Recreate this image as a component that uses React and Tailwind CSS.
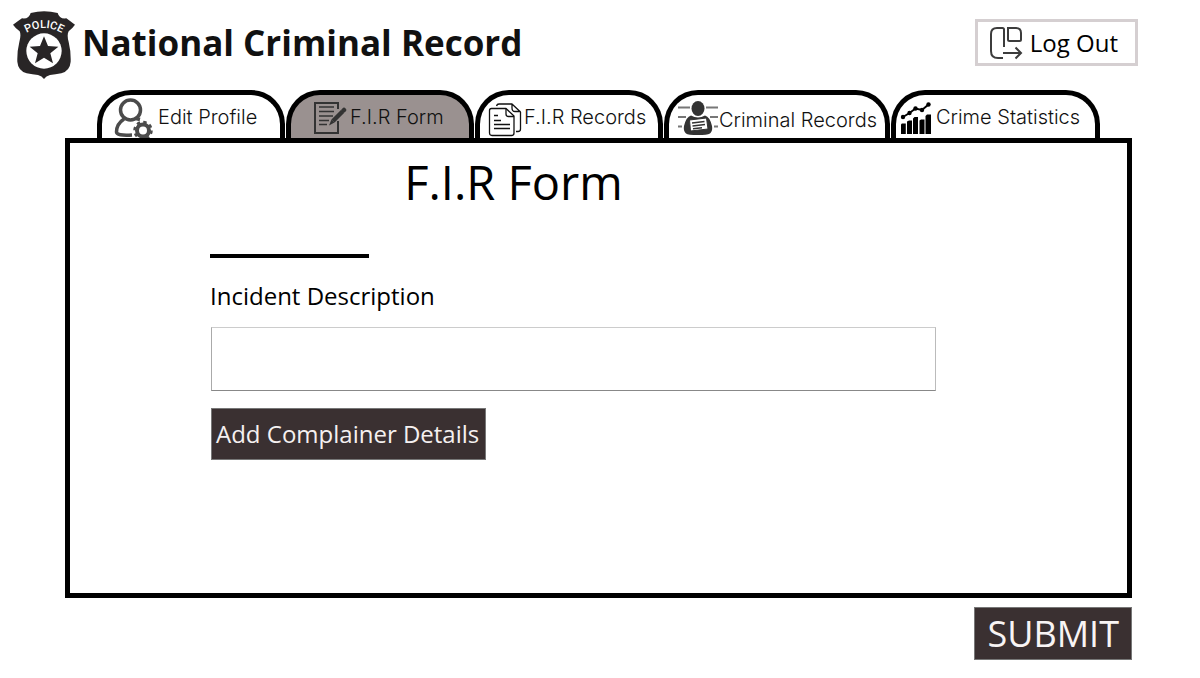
import React from "react";

function BadgeLogo() {
  return (
    <svg viewBox="39 33 186 204" className="h-[68px] w-[62px] shrink-0" aria-hidden="true">
      <path
        fill="#282526"
        d="M92 39Q132 28 173 39Q178 58 199 55Q211 64 225 74Q218 84 206 94Q200 104 206 126Q213 155 212 185Q210 212 184 220Q166 224 150 225Q138 228 132 237Q126 228 114 225Q98 224 80 220Q54 212 52 185Q51 155 58 126Q64 104 59 94Q46 84 39 74Q53 64 66 55Q87 58 92 39Z"
      />
      <path id="badge-arc" fill="none" d="M70 105Q132 63 195 105" />
      <text fill="#fff" fontSize="33" fontWeight="500" fontFamily="Roboto, sans-serif" textAnchor="middle">
        <textPath href="#badge-arc" startOffset="50%">POLICE</textPath>
      </text>
      <circle cx="132" cy="153" r="53" fill="#fff" />
      <path
        fill="#282526"
        d="M132 109L144 138L175 140L151 160L159 190L132 173L105 190L113 160L89 140L120 138Z"
      />
    </svg>
  );
}

function LogOutIcon() {
  return (
    <svg viewBox="0 0 34 34" className="h-[34px] w-[34px]" fill="none" stroke="#3c3c3c" strokeWidth="2" aria-hidden="true">
      <path d="M15 21V3.500Q15 2 13.500 2H8Q2 2 2 8V25Q2 32 9 32H14" />
      <path d="M19 2H27Q32 2 32 7V13.500Q32 15 30.500 15H20.500Q19 15 19 13.500Z" />
      <path d="M14 27H32M26.500 21.500L32 27L26.500 32.500" />
    </svg>
  );
}

function ProfileIcon() {
  return (
    <svg viewBox="0 0 40 42" className="h-[42px] w-[40px] shrink-0" aria-hidden="true">
      <g fill="none" stroke="#4b4b4b" strokeWidth="3.500">
        <ellipse cx="16.500" cy="13" rx="10" ry="10" />
        <path d="M10 22Q2.500 27 2.500 35Q2.500 39 18 38M22 21.500L26 22.500" />
      </g>
      <circle cx="29" cy="33.500" r="6" fill="none" stroke="#4b4b4b" strokeWidth="4" />
      <circle cx="29" cy="33.500" r="8.500" fill="none" stroke="#4b4b4b" strokeWidth="2.500" strokeDasharray="3.400 3.276" />
    </svg>
  );
}

function FormIcon() {
  return (
    <svg viewBox="0 0 34 34" className="h-[34px] w-[34px] shrink-0" fill="none" stroke="#333" aria-hidden="true">
      <path strokeWidth="2" d="M25 8V2H2V32H25V20" />
      <path strokeWidth="1.500" d="M6 6H21M6 10.500H21M6 15H20M6 19.500H16M6 23.500H14" />
      <path strokeWidth="4.500" d="M20 20L29.500 10.500" />
      <path strokeWidth="4.500" strokeLinecap="round" d="M30.500 9.500L31 9" />
      <path fill="#333" stroke="none" d="M18.500 18.500L21.500 21.500L16 24.500Z" />
    </svg>
  );
}

function RecordsIcon() {
  return (
    <svg viewBox="0 0 34 34" className="h-[34px] w-[34px] shrink-0" fill="none" stroke="#111" strokeWidth="1.300" strokeLinejoin="round" aria-hidden="true">
      <path d="M3.500 5.500H18L26 13V30Q26 32.500 23.500 32.500H4Q1.500 32.500 1.500 30V7.500Q1.500 5.500 3.500 5.500Z" />
      <path d="M18 5.500V11Q18 13.500 20.500 13.500H26" />
      <path d="M8.500 3Q9 1 11 1H24L32.500 9V26Q32.500 28.500 30 28.500H28M24 1V5Q24 8.500 27 8.500H32.500" />
      <path d="M6 12.500H10M6 17.500H13M6 21.500H22M6 25.500H22" />
    </svg>
  );
}

function CriminalIcon() {
  return (
    <svg viewBox="0 0 40 36" className="h-[36px] w-[40px] shrink-0" aria-hidden="true">
      <path stroke="#777" strokeWidth="2" d="M0 7.500H12M28 7.500H40M0 17H8M32 17H40M0 26.500H4M36 26.500H40" />
      <ellipse cx="20" cy="8.500" rx="6.500" ry="7.500" fill="#333" />
      <path fill="#333" d="M13 15.500Q20 19.500 27 15.500Q32 17 34 26Q35 31 32 33.500Q29 35 20 35Q10 35 8 33.500Q5 31 6 26Q8 17 13 15.500Z" />
      <path fill="#fff" stroke="#333" strokeWidth="1" d="M11.500 20L28.500 18L30 29L12.500 31Z" />
      <path stroke="#333" strokeWidth="1.500" d="M14 23L26.500 21.500M14.500 26L27 24.500M15 28.800L24 27.800" />
    </svg>
  );
}

function StatisticsIcon() {
  return (
    <svg viewBox="0 0 32 32" className="h-[32px] w-[32px] shrink-0" aria-hidden="true">
      <path
        fill="#000"
        d="M1 23Q1 21.500 2 21.500H5.800V32H1ZM7 19.500L9 18.500H12V32H7ZM13 16.500L14.500 15H18V32H13ZM19.500 18.500L21 17.500H24.500V32H19.500ZM25.500 14L27 12.500H31V32H25.500Z"
      />
      <path fill="none" stroke="#000" strokeWidth="2" d="M3 15L9.500 11L15.500 6.500L22 8L28.500 2.500" />
      <circle cx="3" cy="15" r="2.200" />
      <circle cx="9.500" cy="11" r="2.200" />
      <circle cx="15.500" cy="6.500" r="2.200" />
      <circle cx="22" cy="8" r="2.200" />
      <circle cx="28.500" cy="2.500" r="2.200" />
    </svg>
  );
}

const tabs = [
  { label: "Edit Profile", Icon: ProfileIcon, box: "pl-[12px] gap-[4px] bg-white", icon: "pt-[2px]", text: "pt-[10px]" },
  { label: "F.I.R Form", Icon: FormIcon, box: "pl-[22px] gap-[3px] bg-[#9a9190]", icon: "pt-[6px]", text: "pt-[10px]", current: true },
  { label: "F.I.R Records", Icon: RecordsIcon, box: "pl-[8px] gap-[2px] bg-white", icon: "pt-[8px]", text: "pt-[10px]" },
  { label: "Criminal Records", Icon: CriminalIcon, box: "pl-[9px] gap-[1px] bg-white", icon: "pt-[5px]", text: "pt-[13px]" },
  { label: "Crime Statistics", Icon: StatisticsIcon, box: "pl-[4px] gap-[4px] bg-white", icon: "pt-[7px]", text: "pt-[10px]" },
];

function TabBar() {
  return (
    <nav
      aria-label="Sections"
      className="grid h-[48px] grid-cols-[minmax(0,188fr)_minmax(0,188fr)_minmax(0,188fr)_minmax(0,226fr)_minmax(0,209fr)] gap-px px-[32px]"
    >
      {tabs.map(({ label, Icon, box, icon, text, current }) => (
        <a
          key={label}
          href="#"
          aria-current={current ? "page" : undefined}
          className={`flex items-start overflow-hidden rounded-t-[34px] border-x-[5px] border-t-[5px] border-black ${box}`}
        >
          <span className={icon}>
            <Icon />
          </span>
          <span className={`whitespace-nowrap font-['Inter',sans-serif] text-[20px] font-light leading-6 text-[#111] ${text}`}>
            {label}
          </span>
        </a>
      ))}
    </nav>
  );
}

export default function App() {
  return (
    <div className="bg-white font-['Open_Sans',sans-serif] text-black">
      <header className="flex items-start justify-between pl-[13px] pr-[62px] pt-[11px]">
        <div className="flex items-center gap-[7px]">
          <BadgeLogo />
          <h1 className="whitespace-nowrap pb-1 text-[35px] font-bold leading-[48px] text-[#111]">National Criminal Record</h1>
        </div>
        <button type="button" className="mt-2 flex h-[47px] items-center gap-[7px] border-[3px] border-[#d5cfd1] pl-[11px] pr-[17px] text-[24px]">
          <LogOutIcon />
          Log Out
        </button>
      </header>

      <div className="pl-[65px] pr-[68px] pt-[11px]">
        <TabBar />
        <main className="border-[5px] border-black px-[140px] pb-[133px] pt-[8px]">
          <h2 className="pr-[170px] text-center text-[47px] leading-[62px]">F.I.R Form</h2>
          <hr className="mt-[41px] w-[159px] border-t-4 border-black" />
          <div className="mr-[52px]">
            <label htmlFor="incident" className="block pt-[20px] text-[24px] leading-[36px]">
              Incident Description
            </label>
            <input
              id="incident"
              type="text"
              className="mx-px mt-[13px] block h-[64px] w-full border border-b-[#888] border-l-[#aaa] border-r-[#bbb] border-t-[#ccc] px-3 text-[24px]"
            />
          </div>
          <button type="button" className="ml-px mt-[17px] block h-[52px] whitespace-nowrap border border-[#777] bg-[#3a3031] pl-1 pr-[6px] text-[24px] text-[#f5f0f0]">
            Add Complainer Details
          </button>
        </main>
        <div className="flex justify-end pt-[9px]">
          <button type="submit" className="h-[53px] border border-[#777] bg-[#3a3031] px-[12px] text-[36px] leading-[50px] text-[#f8f4f4]">
            SUBMIT
          </button>
        </div>
      </div>
    </div>
  );
}
